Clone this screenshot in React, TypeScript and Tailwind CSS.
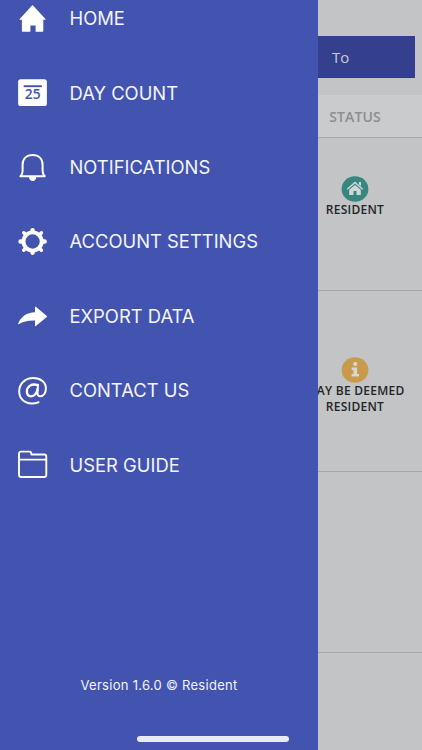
import type { ReactNode } from "react";

const HomeIcon = () => (
  <svg width="30" height="30" viewBox="0.5 0 30 30" fill="#fff">
    <path d="M15 1.1 28 14.9q.5.9-.5.9h-1.7v11.2q0 .8-.8.8h-6.9v-6.3h-5.2v6.3H5.2q-.8 0-.8-.8V15.8H2.6q-1 0-.4-.9z" />
  </svg>
);

const CalendarIcon = () => (
  <svg width="30" height="30" viewBox="0.5 0 30 30">
    <rect x="0.6" y="1.2" width="28.8" height="26.9" rx="2.6" fill="#fff" />
    <path d="M6.2 8.2h18.2" stroke="#4353b0" strokeWidth="1.9" />
    <text x="15.2" y="21" textAnchor="middle" fontSize="13.8" fontWeight="600" fill="#4353b0" className="font-['Open_Sans',sans-serif]">25</text>
  </svg>
);

const BellIcon = () => (
  <svg width="30" height="30" viewBox="0.5 0 30 30" fill="none">
    <path d="M2.9 23.3h24.4q-2.2-2.3-2.2-5.4v-5.9c0-6-3.9-9.9-10-9.9s-10 3.9-10 9.9v5.9q0 3.1-2.2 5.4z" stroke="#fff" strokeWidth="2" strokeLinejoin="round" />
    <path d="M11.5 23.7h7.2c0 2.7-1.4 4.3-3.6 4.3s-3.6-1.6-3.6-4.3z" fill="#fff" />
  </svg>
);

const GearIcon = () => (
  <svg width="30" height="30" viewBox="0.5 0 30 30">
    <g transform="translate(15.1 14.5)">
      <circle r="9.1" fill="none" stroke="#fff" strokeWidth="3.9" />
      <g stroke="#fff" strokeLinecap="round" strokeWidth="4.6">
        <path d="M0-10.2V-11.1M0 10.2V11.1M-11 0H-12M11 0H12" />
        <path d="m-7.9-7.8-.9-.9M7.9-7.8l.9-.9M-7.9 7.8l-.9.9M7.9 7.8l.9.9" strokeWidth="3.6" />
      </g>
    </g>
  </svg>
);

const ShareIcon = () => (
  <svg width="30" height="30" viewBox="0.5 0 30 30" fill="#fff">
    <path d="M17.5 5q0-.9.8-.3l11 9.2q.5.5 0 1l-11 9q-.8.6-.8-.4v-4.9c-7.3-.2-12 1.1-15.9 3.5q-1.5.8-.8-.8C3.8 14.6 9.1 10.6 17.5 10.3z" />
  </svg>
);

const AtIcon = () => (
  <svg width="30" height="30" viewBox="0.5 0 30 30" fill="none" stroke="#fff" strokeLinecap="round">
    <path d="M21 26.2C12.6 29.6 1.7 26 1.7 15.5 1.7 7.5 7.8 2.1 15.9 2.1c7.4 0 12.5 4.2 12.5 10.2 0 4.6-2.3 8-5.4 8-2.2 0-3.1-1.4-3-3.7l.5-7.9" strokeWidth="2" />
    <path d="M20.3 9.2c-6.1-2.2-10.9 1.2-10.9 6.4 0 2.8 1.5 4.7 4 4.7 3.5 0 6.3-3.2 6.6-7.1" strokeWidth="2.3" />
  </svg>
);

const FolderIcon = () => (
  <svg width="30" height="30" viewBox="0.5 0 30 30" fill="none" stroke="#fff" strokeWidth="1.9" strokeLinejoin="round">
    <path d="M1.5 24.7V3.8Q1.5 1.6 3.8 1.6h8q2 0 2 2v.9h12.8q2.2 0 2.2 2.2v18q0 2.3-2.2 2.3H3.8q-2.3 0-2.3-2.3zM1.5 9.6H28.8" />
  </svg>
);

const menuItems: { label: string; icon: ReactNode }[] = [
  { label: "HOME", icon: <HomeIcon /> },
  { label: "DAY COUNT", icon: <CalendarIcon /> },
  { label: "NOTIFICATIONS", icon: <BellIcon /> },
  { label: "ACCOUNT SETTINGS", icon: <GearIcon /> },
  { label: "EXPORT DATA", icon: <ShareIcon /> },
  { label: "CONTACT US", icon: <AtIcon /> },
  { label: "USER GUIDE", icon: <FolderIcon /> },
];

const Drawer = () => (
  <nav className="relative z-10 flex flex-col justify-between w-[318px] h-full shrink-0 bg-[#4353b0] text-[#f3f5ff] font-['Inter',sans-serif]">
    <ul className="-mt-[18.2px]">
      {menuItems.map((item) => (
        <li key={item.label} className="flex items-center h-[74.4px] pl-[18px] gap-[21.5px]">
          {item.icon}
          <span className="text-[18.4px] whitespace-nowrap">{item.label}</span>
        </li>
      ))}
    </ul>
    <p className="text-center text-[13px] leading-5 tracking-[0.28px] pb-[55px]">Version 1.6.0 © Resident</p>
  </nav>
);

const ResidentBadge = () => (
  <svg width="28" height="26" viewBox="0 0 28 26">
    <ellipse cx="14" cy="13" rx="13.4" ry="12.8" fill="#37877f" />
    <path d="m6.3 13.2 7.7-6.7 7.7 6.7" fill="none" stroke="#d0d8d8" strokeWidth="1.5" />
    <path d="M18 6.1h2v4l-2-1.6zM14 8.9l5.8 4.8v5.4h-4.3v-4h-3v4H8.2v-5.4z" fill="#d0d8d8" />
  </svg>
);

const InfoBadge = () => (
  <svg width="28" height="26" viewBox="0 0 28 26">
    <ellipse cx="14" cy="13" rx="13.4" ry="12.8" fill="#c99a4b" />
    <circle cx="14.2" cy="7" r="2.1" fill="#d8d7d3" />
    <path d="M10.7 10.5h5.4v6.5h1.9v2.4h-7.4v-2.4h1.9v-4h-1.8z" fill="#d8d7d3" />
  </svg>
);

// The page behind the open drawer. Its column starts under the drawer's edge.
const StatusTable = () => (
  <main className="flex flex-col -ml-[30px] w-[134px] h-full shrink-0 text-center font-['Open_Sans',sans-serif]">
    <div className="mt-9 mr-[7px] h-[42px] shrink-0 bg-[#343f8e] border-b border-[#303984] text-left pl-11 text-[15px] leading-[42px] font-medium text-[#c6cbe0]">To</div>
    <div className="mt-[17px] h-[43px] shrink-0 bg-[#c9cbcd] border-b border-[#a5a7a9] text-[14px] leading-[43px] tracking-[0.1px] font-semibold text-[#8c8e90]">STATUS</div>
    <div className="flex flex-col items-center h-[153px] shrink-0 border-b border-[#a5a7a9] pt-[38px] text-[12px] leading-4 tracking-[0.25px] font-semibold text-[#232427]">
      <ResidentBadge />
      <span>RESIDENT</span>
    </div>
    <div className="flex flex-col items-center h-[181px] shrink-0 border-b border-[#a5a7a9] pt-[66px] text-[12px] leading-4 tracking-[0.25px] font-semibold text-[#232427]">
      <InfoBadge />
      <span className="whitespace-nowrap">MAY BE DEEMED</span>
      <span>RESIDENT</span>
    </div>
    <div className="h-[181px] shrink-0 border-b border-[#a5a7a9]" />
  </main>
);

const App = () => {
  return (
    <div className="relative flex w-[422px] h-[750px] overflow-hidden bg-[#c2c4c6]">
      <Drawer />
      <StatusTable />
      <div className="absolute z-20 left-[137px] top-[736px] w-[152px] h-[6px] rounded-full bg-[#e8eaf6]" />
    </div>
  );
};

export default App;
